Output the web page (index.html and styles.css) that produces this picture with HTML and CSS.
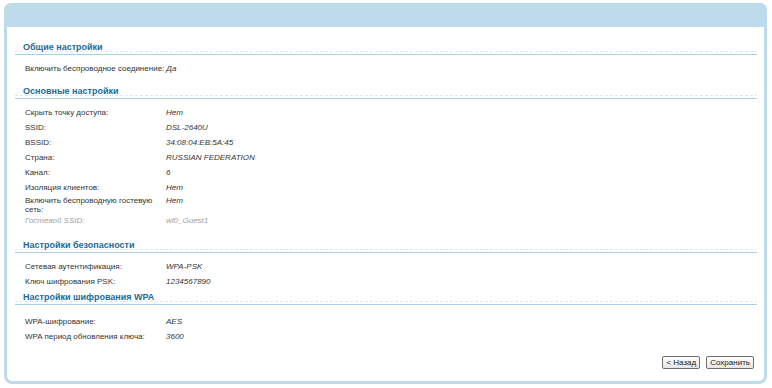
FILE: index.html
```html
<!DOCTYPE html>
<html lang="ru">
  <head>
    <meta charset="UTF-8" />
    <meta name="viewport" content="width=device-width, initial-scale=1.0" />
    <title>Беспроводная сеть</title>
    <link rel="stylesheet" href="styles.css">
  </head>
  <body>
    <div class="panel">
      <div class="panel-head"></div>

      <div class="panel-body">
        <div class="section">
          <h2>Общие настройки</h2>
          <div class="rows">
            <div class="row nowrap"><span class="label">Включить беспроводное соединение:</span><span class="value">Да</span></div>
          </div>
        </div>

        <div class="section">
          <h2>Основные настройки</h2>
          <div class="rows extra">
            <div class="row"><span class="label">Скрыть точку доступа:</span><span class="value">Нет</span></div>
            <div class="row"><span class="label">SSID:</span><span class="value">DSL-2640U</span></div>
            <div class="row"><span class="label">BSSID:</span><span class="value">34:08:04:EB:5A:45</span></div>
            <div class="row"><span class="label">Страна:</span><span class="value">RUSSIAN FEDERATION</span></div>
            <div class="row"><span class="label">Канал:</span><span class="value">6</span></div>
            <div class="row"><span class="label">Изоляция клиентов:</span><span class="value">Нет</span></div>
            <div class="row tall"><span class="label">Включить беспроводную гостевую сеть:</span><span class="value">Нет</span></div>
            <div class="row muted"><span class="label">Гостевой SSID:</span><span class="value">wl0_Guest1</span></div>
          </div>
        </div>

        <div class="section">
          <h2>Настройки безопасности</h2>
          <div class="rows">
            <div class="row"><span class="label">Сетевая аутентификация:</span><span class="value">WPA-PSK</span></div>
            <div class="row"><span class="label">Ключ шифрования PSK:</span><span class="value">1234567890</span></div>
          </div>
        </div>

        <div class="section tight">
          <h2>Настройки шифрования WPA</h2>
          <div class="rows spaced">
            <div class="row"><span class="label">WPA-шифрование:</span><span class="value">AES</span></div>
            <div class="row"><span class="label">WPA период обновления ключа:</span><span class="value">3600</span></div>
          </div>
        </div>

        <div class="buttons">
          <button>&lt; Назад</button>
          <button>Сохранить</button>
        </div>
      </div>
    </div>
  </body>
</html>
```

FILE: styles.css
```css
body {
  margin: 0;
  padding: 3px 0 0 4px;
  background: #fff;
  font-family: "Liberation Sans", Arial, sans-serif;
  font-size: 8px;
  color: #333;
}
.panel {
  width: 757px;
  height: 378px;
  border: 3px solid #bedbeb;
  border-top: none;
  border-radius: 8px;
  display: flex;
  flex-direction: column;
}
.panel-head {
  height: 24px;
  background: #bedbeb;
  border-radius: 7px 7px 0 0;
  margin: 0 -3px;
}
.panel-body {
  flex: 1;
  padding: 0 7px 0 8px;
  display: flex;
  flex-direction: column;
}
.section {
  margin-top: 9px;
}
.section:first-child {
  margin-top: 14px;
}
.section.tight {
  margin-top: 2px;
}
h2 {
  margin: 0;
  padding-left: 8px;
  height: 13px;
  line-height: 13px;
  font-size: 9px;
  font-weight: bold;
  color: #1c6b96;
  border-bottom: 1px solid #a9cfe1;
  background: repeating-linear-gradient(to right, #dcebf3 0 3px, transparent 3px 5px) left bottom 2px / 100% 1px no-repeat;
}
.rows {
  padding: 6px 0 0 10px;
}
.rows.extra {
  padding-bottom: 2px;
}
.rows.spaced {
  padding-top: 9px;
}
.row {
  display: flex;
  align-items: center;
  height: 15px;
}
.row.nowrap .label {
  white-space: nowrap;
  width: auto;
  padding-right: 2px;
}
.row.tall {
  height: 18px;
  line-height: 9px;
  align-items: flex-start;
}
.label {
  width: 136px;
  padding-right: 5px;
  flex-shrink: 0;
}
.value {
  font-style: italic;
}
.row.tall .label,
.row.tall .value {
  margin-top: 1px;
}
.row.muted {
  color: #a0a0a0;
}
.row.muted .label {
  font-style: italic;
}
.buttons {
  margin-top: auto;
  margin-bottom: 12px;
  display: flex;
  justify-content: flex-end;
  gap: 6px;
  padding-right: 3px;
}
button {
  font-family: "Liberation Sans", Arial, sans-serif;
  font-size: 8px;
  color: #222;
  height: 13px;
  padding: 0 3px;
  border: 1px solid #707070;
  border-radius: 2px;
  background: linear-gradient(#fdfdfd, #e6e6e6);
  line-height: 11px;
}
```
